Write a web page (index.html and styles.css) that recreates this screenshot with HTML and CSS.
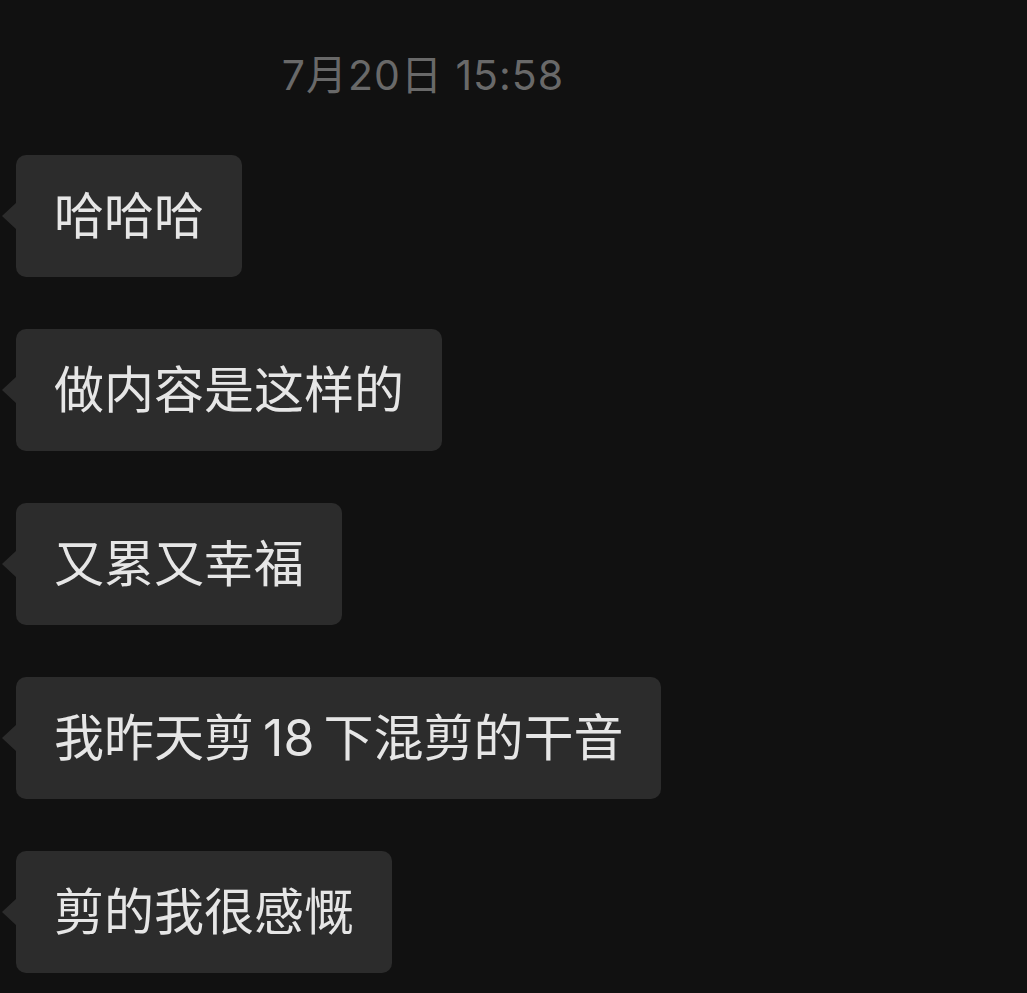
FILE: index.html
```html
<!DOCTYPE html>
<html lang="zh-CN">
<head>
  <meta charset="UTF-8">
  <title>聊天记录</title>
  <link rel="stylesheet" href="styles.css">
</head>
<body>
  <div class="chat">
    <div class="time">7月20日 15:58</div>
    <div class="messages">
      <div class="bubble">哈哈哈</div>
      <div class="bubble">做内容是这样的</div>
      <div class="bubble">又累又幸福</div>
      <div class="bubble">我昨天剪 18 下混剪的干音</div>
      <div class="bubble">剪的我很感慨</div>
    </div>
  </div>
</body>
</html>
```

FILE: styles.css
```css
html, body {
  margin: 0;
  padding: 0;
  background: #111111;
}
body {
  font-family: Inter, "Noto Sans CJK SC", sans-serif;
  height: 993px;
  overflow: hidden;
}
.chat {
  padding-top: 53px;
}
.time {
  width: 846px;
  text-align: center;
  font-size: 41px;
  line-height: 45px;
  letter-spacing: 1px;
  color: #696969;
}
.messages {
  display: flex;
  flex-direction: column;
  align-items: flex-start;
  gap: 52px;
  margin-top: 57px;
  padding-left: 16px;
}
.bubble {
  position: relative;
  background: #2c2c2c;
  color: #e6e6e6;
  font-size: 50px;
  line-height: 50px;
  padding: 36px 38px 36px 38px;
  border-radius: 10px;
  white-space: nowrap;
  word-spacing: -5px;
}
.bubble:before {
  content: "";
  position: absolute;
  left: -14px;
  top: 47px;
  width: 0;
  height: 0;
  border-top: 14px solid transparent;
  border-bottom: 14px solid transparent;
  border-right: 15px solid #2c2c2c;
}
```
